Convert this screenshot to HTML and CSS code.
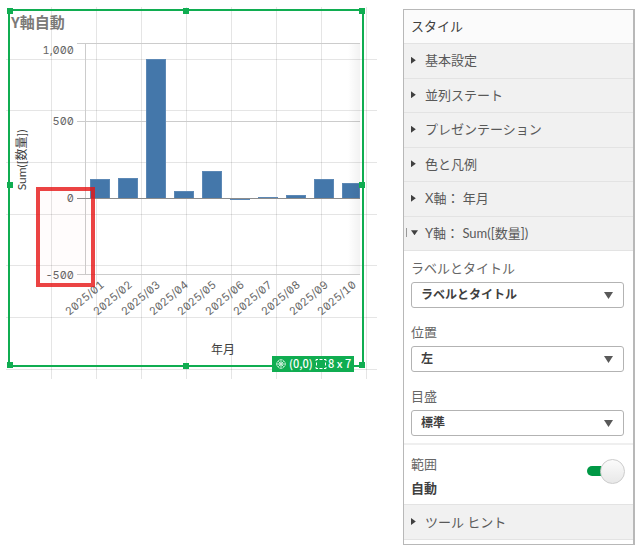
FILE: index.html
```html
<!DOCTYPE html>
<html lang="ja">
<head>
<meta charset="utf-8">
<meta name="viewport" content="width=device-width, initial-scale=1">
<title>Y軸自動</title>
<link rel="stylesheet" href="styles.css">
</head>
<body>
<main class="workspace">
  <section class="sheet">
    <svg class="chart" viewBox="0 0 372 372" role="img" aria-label="Y軸自動">
      <g transform="translate(-6 -7)">
        <path class="sheet-grid" d="M51.5 7V379M96.5 7V379M141.5 7V379M186.5 7V379M231.5 7V379M276.5 7V379M321.5 7V379M366.5 7V379M6 59.5H377M6 110.5H377M6 162.5H377M6 214.5H377M6 265.5H377M6 317.5H377M6 369.5H377"/>
        <text class="title" x="11" y="28">Y軸自動</text>

        <path class="axis" d="M77 43.5H360M77 121.5H360M77 274.5H360M85.5 43V274"/>
        <g class="bars">
          <rect x="90.5" y="179.5" width="19" height="19"/>
          <rect x="118.5" y="178.5" width="19" height="20"/>
          <rect x="146.5" y="59.5" width="19" height="139"/>
          <rect x="174.5" y="191.5" width="19" height="7"/>
          <rect x="202.5" y="171.5" width="19" height="27"/>
          <rect x="230.5" y="198.5" width="19" height="1"/>
          <rect x="258.5" y="197.5" width="19" height="1"/>
          <rect x="286.5" y="195.5" width="19" height="3"/>
          <rect x="314.5" y="179.5" width="19" height="19"/>
          <rect x="342.5" y="183.5" width="17" height="15"/>
        </g>
        <path class="zero" d="M77 198.5H360"/>
        <defs>
          <linearGradient id="fade"><stop offset="0" stop-color="#000" stop-opacity="0"/><stop offset="1" stop-color="#000" stop-opacity=".05"/></linearGradient>
        </defs>
        <rect x="348" y="44" width="12" height="230" fill="url(#fade)"/>

        <g class="ticks">
          <text x="74" y="54">1,000</text>
          <text x="74" y="125">500</text>
          <text x="74" y="202">0</text>
          <text x="74" y="279">-500</text>
          <text transform="translate(105 286) rotate(-40)">2025/01</text>
          <text transform="translate(133 286) rotate(-40)">2025/02</text>
          <text transform="translate(161 286) rotate(-40)">2025/03</text>
          <text transform="translate(189 286) rotate(-40)">2025/04</text>
          <text transform="translate(217 286) rotate(-40)">2025/05</text>
          <text transform="translate(245 286) rotate(-40)">2025/06</text>
          <text transform="translate(273 286) rotate(-40)">2025/07</text>
          <text transform="translate(301 286) rotate(-40)">2025/08</text>
          <text transform="translate(329 286) rotate(-40)">2025/09</text>
          <text transform="translate(357 286) rotate(-40)">2025/10</text>
        </g>
        <text class="axis-name" transform="translate(26 160) rotate(-90)">Sum([数量])</text>
        <text class="axis-name" x="223" y="354">年月</text>

        <rect class="mark" x="38" y="189" width="55" height="96"/>

        <rect class="frame" x="9" y="10" width="354" height="356"/>
        <path class="handles" d="M7 8h6v6h-6zM183 8h6v6h-6zM359 8h6v6h-6zM7 182h6v6h-6zM359 182h6v6h-6zM7 362h6v6h-6zM183 363h6v6h-6zM359 362h6v6h-6z"/>
        <rect class="badge" x="272" y="356" width="82" height="16"/>
        <g class="badge-icon">
          <circle cx="281" cy="364" r="4.3"/>
          <circle cx="281" cy="364" r="2"/>
          <path d="M281 359V369M276 364H286M278 361L284 367M284 361L278 367"/>
        </g>
        <path class="size-icon" d="M316 361V359.500H318M324 359.500H326V361M326 367V368.500H324M318 368.500H316V367M319.500 359.500H322.500M319.500 368.500H322.500M316.500 362.500V365.500M325.500 362.500V365.500"/>
        <text class="badge-text" x="289" y="368">(0,0)</text>
        <text class="badge-text" x="328" y="368">8 x 7</text>
      </g>
    </svg>
  </section>

  <aside class="panel">
    <h1 class="panel-title">スタイル</h1>
    <div class="sections">
      <button class="row" type="button"><span class="arrow"></span>基本設定</button>
      <button class="row" type="button"><span class="arrow"></span>並列ステート</button>
      <button class="row" type="button"><span class="arrow"></span>プレゼンテーション</button>
      <button class="row" type="button"><span class="arrow"></span>色と凡例</button>
      <button class="row" type="button"><span class="arrow"></span>X軸： 年月</button>
      <button class="row row-open" type="button" aria-expanded="true"><span class="arrow arrow-down"></span>Y軸： Sum([数量])</button>
    </div>
    <div class="fields">
      <div class="field">
        <label for="labels">ラベルとタイトル</label>
        <select id="labels"><option>ラベルとタイトル</option></select>
      </div>
      <div class="field">
        <label for="position">位置</label>
        <select id="position"><option>左</option></select>
      </div>
      <div class="field">
        <label for="scale">目盛</label>
        <select id="scale"><option>標準</option></select>
      </div>
    </div>
    <div class="range">
      <label class="range-text" for="auto">範囲<strong>自動</strong></label>
      <input class="switch" id="auto" type="checkbox" role="switch" checked>
    </div>
    <button class="row row-last" type="button"><span class="arrow"></span>ツール ヒント</button>
  </aside>
</main>
</body>
</html>
```

FILE: styles.css
```css
* { box-sizing: border-box; }

body {
  margin: 0;
  background: #fff;
  color: #666;
  font: 13px/20px "Noto Sans CJK JP", sans-serif;
}

.workspace {
  display: grid;
  grid-template-columns: 372fr 232fr;
  gap: 25px;
  align-items: start;
  padding: 7px 6px;
}

.chart { display: block; width: 100%; }
.sheet-grid { stroke: #000; stroke-opacity: .1; fill: none; }
.title { font-size: 15px; font-weight: 700; fill: #7b7a78; }
.axis { stroke: #ccc; fill: none; }
.zero { stroke: #8c8c8c; }
.bars { fill: #4477aa; }
.bars rect { stroke: #5c88b5; stroke-width: 1; }
.ticks {
  font-family: Inter, "Noto Sans", sans-serif;
  font-size: 11px;
  font-variant-numeric: slashed-zero tabular-nums;
  fill: #666;
  text-anchor: end;
}
.axis-name {
  font-family: Lato, "Noto Sans CJK JP", sans-serif;
  font-size: 12px;
  fill: #404040;
  text-anchor: middle;
}
.mark { fill: #f00; fill-opacity: .01; stroke: #e61414; stroke-opacity: .8; stroke-width: 4; }
.frame { fill: none; stroke: #10ad51; stroke-width: 2; }
.handles, .badge { fill: #10ad51; }
.badge-icon { fill: none; stroke: #fff; stroke-width: .7; stroke-opacity: .8; }
.size-icon { fill: none; stroke: #fff; stroke-width: 1; }
.badge-text { font-size: 11px; font-weight: 500; fill: #fff; }

.panel {
  margin-top: 2px;
  padding-bottom: 4px;
  border: 1px solid #b8b8b8;
  border-right-width: 2px;
  background: #fff;
}

.panel-title {
  margin: 0;
  padding: 6px 7px 7px;
  background: #fbfbfb;
  color: #404040;
  font-size: 13px;
  font-weight: 400;
}

.sections { display: grid; grid-auto-rows: 1fr; min-height: 207px; }

.row {
  display: flex;
  align-items: center;
  gap: 8px;
  width: 100%;
  padding: 0 7px 1px;
  border: 0;
  border-top: 1px solid #e3e3e3;
  background: #f1f1f1;
  color: #595959;
  font: 13px/20px Lato, "Noto Sans CJK JP", sans-serif;
  text-align: left;
}
.row-open { position: relative; box-shadow: 0 1px #e3e3e3; }
.row-open::before {
  content: "";
  position: absolute;
  left: 2px;
  width: 1px;
  height: 9px;
  background: #999;
}
.row-last { height: 36px; border-bottom: 1px solid #e3e3e3; }

.arrow { width: 6px; height: 7px; background: #404040; clip-path: polygon(0 0, 80% 50%, 0 100%); }
.arrow-down { width: 7px; height: 5px; margin-right: -1px; clip-path: polygon(0 0, 100% 0, 50% 100%); }

.fields {
  display: grid;
  gap: 14px;
  padding: 8px 9px 7px 7px;
  border-bottom: 2px solid #efefef;
}
.field { display: grid; gap: 4px; }

select {
  appearance: none;
  width: 100%;
  height: 26px;
  padding: 0 9px 2px;
  border: 1px solid #b3b3b3;
  border-radius: 3px;
  background: #fff url("data:image/svg+xml,%3Csvg xmlns='http://www.w3.org/2000/svg' width='9' height='7'%3E%3Cpath d='M0 0H9L4.5 7z' fill='%23595959'/%3E%3C/svg%3E") no-repeat right 10px center;
  color: #404040;
  font: 700 12px/20px "Noto Sans CJK JP", sans-serif;
}

.range {
  display: flex;
  align-items: center;
  justify-content: space-between;
  padding: 9px 8px 6px 7px;
}
.range-text { display: grid; gap: 4px; }
.range strong { color: #404040; }

.switch {
  appearance: none;
  display: flex;
  align-items: center;
  justify-content: flex-end;
  width: 38px;
  height: 10px;
  margin: 0 0 10px;
  border-radius: 5px;
  background: linear-gradient(90deg, #009845 60%, transparent 60%);
}
.switch::before {
  content: "";
  width: 23px;
  height: 23px;
  flex: none;
  border: 1px solid #ccc;
  border-radius: 50%;
  background: linear-gradient(#fbfbfb, #e8e8e8);
}
```
